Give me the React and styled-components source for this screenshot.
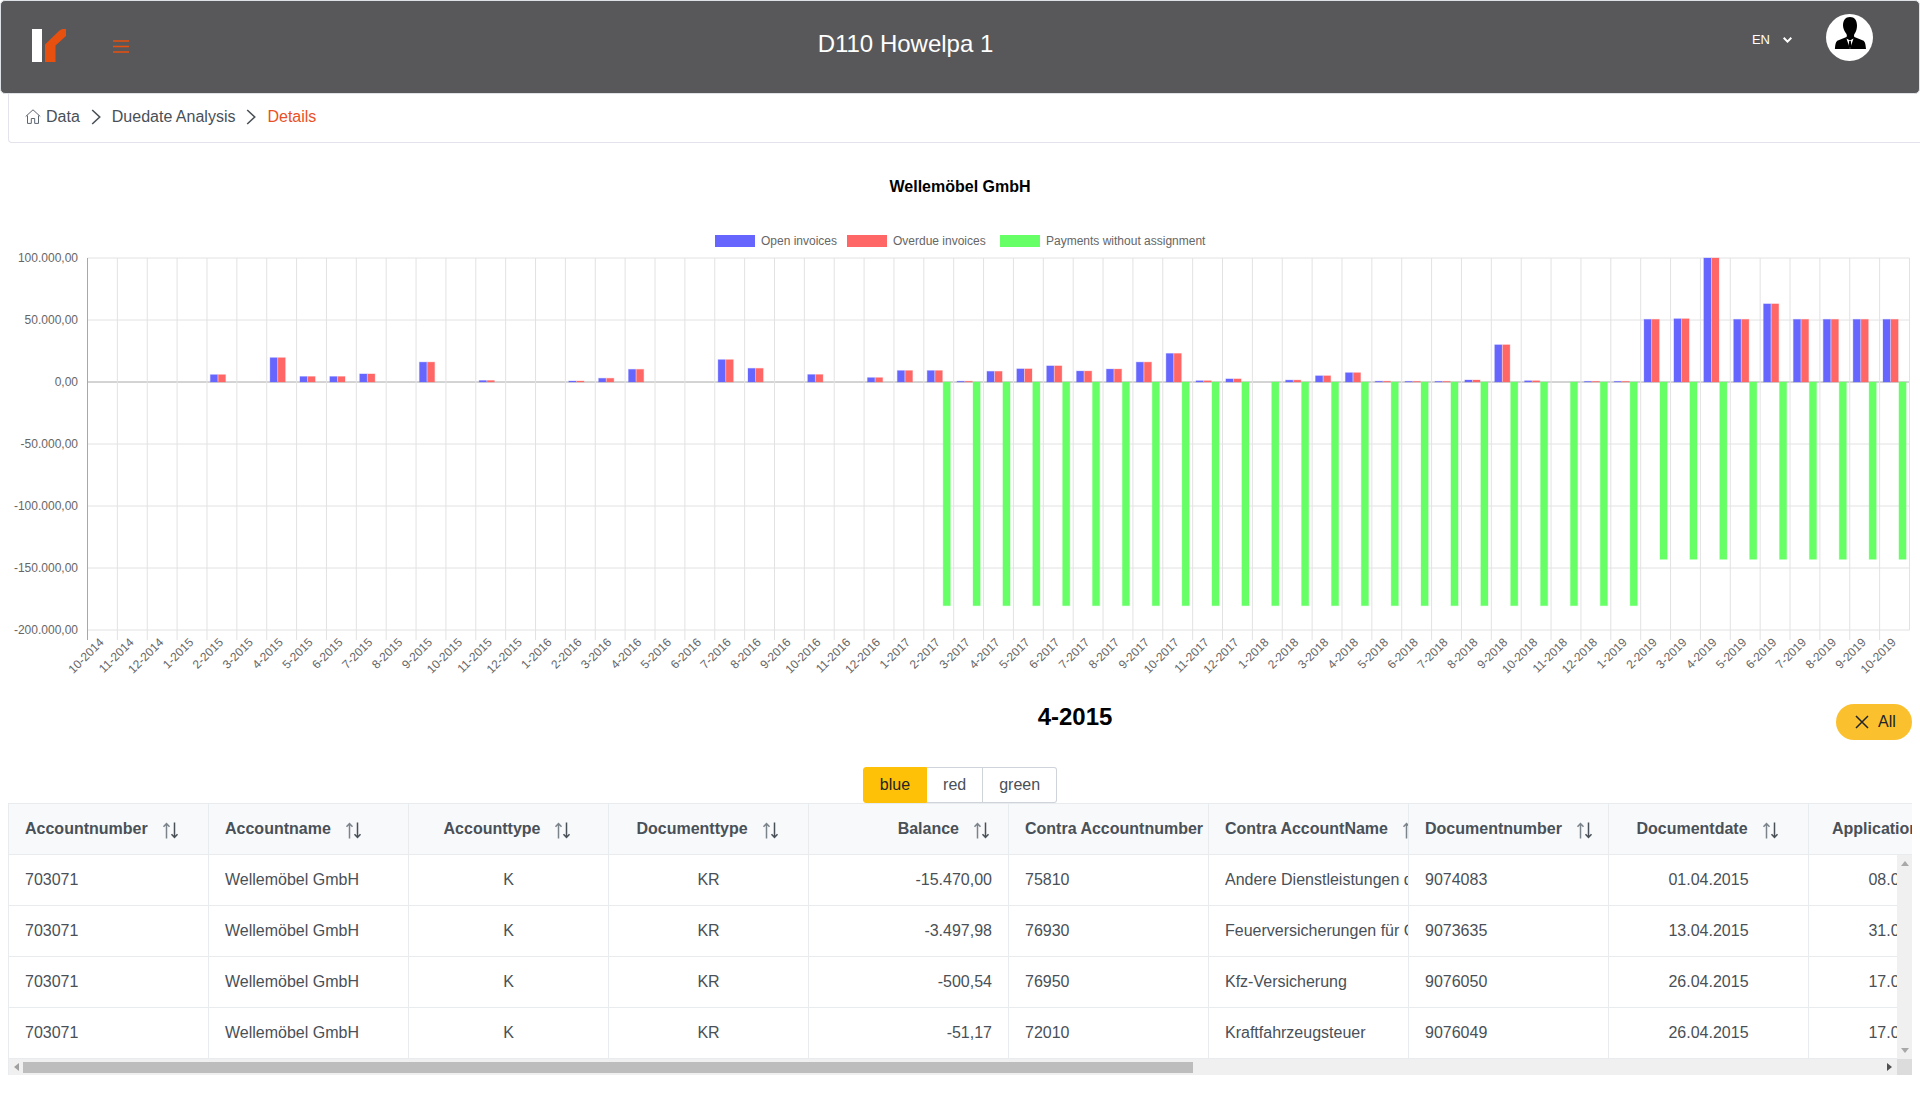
import React from 'react';
import styled, { createGlobalStyle } from 'styled-components';

const months = [];
for (let i = 0; i < 61; i++) {
  const m = ((9 + i) % 12) + 1;
  const y = 2014 + Math.floor((9 + i) / 12);
  months.push(m + '-' + y);
}

// open/overdue amounts per month in thousands, same value on both series
const openValues = [
  0, 0, 0, 0, 5.9, 0, 19.6, 4.4, 4.4, 6.5, 0, 16, 0, 1.2, 0, 0, 0.8, 3, 10.2, 0, 0,
  18, 11, 0, 6, 0, 3.5, 9.2, 9.2, 0.6, 8.6, 10.6, 13, 8.8, 10.4, 16, 23, 1, 2.5, 0,
  1.5, 5, 7.5, 0.6, 0.5, 0.5, 1.6, 30, 1, 0, 0.5, 0.5, 50.5, 51, 100, 50.5, 63, 50.5,
  50.5, 50.5, 50.5,
];

const greenValue = (i) => {
  if (i < 28) return 0;
  return i < 52 ? -180.4 : -143;
};

const yTicks = [100, 50, 0, -50, -100, -150, -200];
const tickLabel = (v) => (v === 0 ? '0,00' : (v < 0 ? '-' : '') + Math.abs(v) + '.000,00');

const LEFT = 87.5;
const RIGHT = 1909.5;
const STEP = (RIGHT - LEFT) / 61;
const PLOT_TOP = 115;
const ZERO = 239;
const PLOT_BOTTOM = 487;
const PX = 1.24;

const legend = [
  { label: 'Open invoices', x: 715, color: '#6666ff' },
  { label: 'Overdue invoices', x: 847, color: '#ff6666' },
  { label: 'Payments without assignment', x: 1000, color: '#66ff66' },
];

const Bar = ({ index, slot, value, color, edge }) => {
  if (!value) return null;
  const x = LEFT + index * STEP + STEP * 0.1 + slot * (STEP * 0.8) / 3 + 0.4;
  const h = Math.abs(value) * PX;
  const y = value > 0 ? ZERO - h : ZERO;
  return <rect x={x} y={y} width={7.2} height={h} fill={color} stroke={edge} strokeWidth="1" />;
};

const DuedateChart = () => (
  <ChartSvg width="1920" height="559" viewBox="0 0 1920 559">
    <text x="960" y="49" textAnchor="middle" fontSize="16" fontWeight="700" fill="#000">
      Wellemöbel GmbH
    </text>
    {legend.map((l) => (
      <g key={l.label}>
        <rect x={l.x} y={92} width="40" height="12" fill={l.color} />
        <text x={l.x + 46} y={102} fontSize="12" fill="#666">{l.label}</text>
      </g>
    ))}
    {yTicks.map((v) => {
      const y = ZERO - v * PX;
      return (
        <g key={v}>
          <line x1={LEFT} x2={RIGHT} y1={y} y2={y} stroke={v === 0 ? '#a8a8a8' : '#e2e2e2'} />
          <text x="78" y={y + 4} textAnchor="end" fontSize="12" fill="#666">{tickLabel(v)}</text>
        </g>
      );
    })}
    {months.map((m, i) => {
      const x = LEFT + i * STEP;
      return (
        <g key={m}>
          <line x1={x} x2={x} y1={PLOT_TOP} y2={PLOT_BOTTOM + 10} stroke={i === 0 ? '#a8a8a8' : '#e2e2e2'} />
          <text
            transform={`translate(${x + 17} ${PLOT_BOTTOM + 13}) rotate(-45)`}
            textAnchor="end"
            fontSize="12"
            fill="#666"
          >
            {m}
          </text>
        </g>
      );
    })}
    <line x1={RIGHT} x2={RIGHT} y1={PLOT_TOP} y2={PLOT_BOTTOM} stroke="#e2e2e2" />
    {openValues.map((v, i) => (
      <g key={i}>
        <Bar index={i} slot={0} value={v} color="#6666ff" edge="rgba(102,102,255,0.3)" />
        <Bar index={i} slot={1} value={v} color="#ff6666" edge="rgba(255,102,102,0.3)" />
        <Bar index={i} slot={2} value={greenValue(i)} color="#66ff66" edge="rgba(102,255,102,0.3)" />
      </g>
    ))}
  </ChartSvg>
);

const SortIcon = () => (
  <SortSvg viewBox="0 0 17 17" fill="none" strokeWidth="1.5">
    <path d="M4.5 16.5V1.5M1.5 4.8l3-3.3 3 3.3" stroke="#7b838b" />
    <path d="M12.5 .5v15M9.5 12.2l3 3.3 3-3.3" stroke="#495057" />
  </SortSvg>
);

const columns = [
  { title: 'Accountnumber', align: 'left' },
  { title: 'Accountname', align: 'left' },
  { title: 'Accounttype', align: 'center' },
  { title: 'Documenttype', align: 'center' },
  { title: 'Balance', align: 'right' },
  { title: 'Contra Accountnumber', align: 'left' },
  { title: 'Contra AccountName', align: 'left' },
  { title: 'Documentnumber', align: 'left' },
  { title: 'Documentdate', align: 'center' },
  { title: 'Applicationdate', align: 'center' },
];

const rows = [
  ['703071', 'Wellemöbel GmbH', 'K', 'KR', '-15.470,00', '75810', 'Andere Dienstleistungen durch Dritte', '9074083', '01.04.2015', '08.04.2015'],
  ['703071', 'Wellemöbel GmbH', 'K', 'KR', '-3.497,98', '76930', 'Feuerversicherungen für Gebäude', '9073635', '13.04.2015', '31.03.2015'],
  ['703071', 'Wellemöbel GmbH', 'K', 'KR', '-500,54', '76950', 'Kfz-Versicherung', '9076050', '26.04.2015', '17.04.2015'],
  ['703071', 'Wellemöbel GmbH', 'K', 'KR', '-51,17', '72010', 'Kraftfahrzeugsteuer', '9076049', '26.04.2015', '17.04.2015'],
];

const App = () => (
  <>
    <GlobalStyle />
    <Topbar>
      <LogoBox>
        <svg width="36" height="34" viewBox="0 0 36 34">
          <rect x="0" y="0" width="10" height="33" fill="#fff" />
          <path d="M13 33V15.5L27.5 1.5Q29 0 31 0H34V7L23.5 16.5V33Z" fill="#e8500f" />
        </svg>
      </LogoBox>
      <MenuButton>
        <svg width="16" height="13" viewBox="0 0 16 13" stroke="#e8500f" strokeWidth="1.5">
          <path d="M0 1h16M0 6.5h16M0 12h16" />
        </svg>
      </MenuButton>
      <PageTitle>D110 Howelpa 1</PageTitle>
      <LangSwitch>
        EN
        <svg width="9" height="6" viewBox="0 0 9 6" fill="none" stroke="#fff" strokeWidth="2">
          <path d="M.7.8l3.8 3.8L8.3.8" />
        </svg>
      </LangSwitch>
      <Avatar>
        <svg width="47" height="47" viewBox="0 0 47 47">
          <circle cx="23.5" cy="23.5" r="23.5" fill="#fff" />
          <path d="M24 3c4.500 0 7 3.300 7 8.500 0 3-.8 6-2.400 8.300-.6 1-.8 2.200-.2 3.200l8.600 3.400c1.800.8 2.600 2.900 3 8.600H8.900c.4-5.700 1.200-7.800 3-8.600l8.600-3.400c.6-1 .4-2.200-.2-3.200C18.700 17.500 17 14.500 17 11.500 17 6.300 19.500 3 24 3z" fill="#000" />
          <path d="M20.500 24.500L24 35 27.500 24.500 24 26.500z" fill="#fff" />
          <path d="M23.200 27h1.600l.7 5L24 35 22.500 32z" fill="#000" />
        </svg>
      </Avatar>
    </Topbar>

    <Breadcrumb>
      <svg width="16" height="15" viewBox="0 0 16 15" fill="none" stroke="#5a6570" strokeWidth="1">
        <path d="M.7 7.500L8 .8l7.300 6.700M2.500 6.500v7.900h3.800V9.500h3.400v4.900h3.800V6.500" />
      </svg>
      <CrumbText>Data</CrumbText>
      <CrumbArrow />
      <CrumbText>Duedate Analysis</CrumbText>
      <CrumbArrow />
      <CrumbText $current>Details</CrumbText>
    </Breadcrumb>

    <DuedateChart />

    <Content>
      <TitleRow>
        <PeriodTitle>4-2015</PeriodTitle>
        <ClearButton>
          <svg width="14" height="14" viewBox="0 0 14 14" fill="none" stroke="#212529" strokeWidth="1.500">
            <path d="M1 1l12 12M13 1L1 13" />
          </svg>
          All
        </ClearButton>
      </TitleRow>

      <SeriesSwitch>
        <SeriesButton $active>blue</SeriesButton>
        <SeriesButton>red</SeriesButton>
        <SeriesButton>green</SeriesButton>
      </SeriesSwitch>

      <TablePanel>
        <HeadRow>
          {columns.map((c) => (
            <HeadCell key={c.title} $align={c.align}>
              {c.title}
              <SortIcon />
            </HeadCell>
          ))}
        </HeadRow>
        <BodyArea>
          <BodyRows>
            {rows.map((row, r) => (
              <Row key={r}>
                {row.map((value, i) => (
                  <Cell key={i} $align={columns[i].align}>{value}</Cell>
                ))}
              </Row>
            ))}
          </BodyRows>
          <VTrack>
            <Arrow $dir="up" />
            <Arrow $dir="down" />
          </VTrack>
          <HTrack>
            <Arrow $dir="left" />
            <HThumb />
            <Arrow $dir="right" />
          </HTrack>
          <Corner />
        </BodyArea>
      </TablePanel>
    </Content>
  </>
);

const CrumbArrow = () => (
  <CrumbSvg width="10" height="16" viewBox="0 0 10 16" fill="none" stroke="#495057" strokeWidth="1.6">
    <path d="M1.200 1l7.500 7-7.500 7" />
  </CrumbSvg>
);

export default App;

const GlobalStyle = createGlobalStyle`
  html, body {
    margin: 0;
    padding: 0;
    background: #fff;
    font-family: "Liberation Sans", Arial, sans-serif;
    color: #495057;
    overflow: hidden;
  }
  * {
    box-sizing: border-box;
  }
`;

const Topbar = styled.header`
  display: flex;
  align-items: center;
  height: 94px;
  background: #58585a;
  border: 1px solid #dee2e6;
  border-radius: 5px;
`;
const LogoBox = styled.div`
  display: flex;
  width: 112px;
  height: 100%;
  padding: 28px 0 0 31px;
`;
const MenuButton = styled.div`
  display: flex;
  align-items: center;
  margin-top: -1px;
`;
const PageTitle = styled.h1`
  flex: 1;
  margin: 0 0 6px 0;
  padding-right: 70px;
  text-align: center;
  color: #fff;
  font-size: 24px;
  font-weight: 400;
`;
const LangSwitch = styled.div`
  display: flex;
  align-items: center;
  gap: 13px;
  margin: 0 34px 15px 0;
  color: #fff;
  font-size: 13px;
`;
const Avatar = styled.div`
  display: flex;
  margin: 0 46px 19px 0;
`;
const Breadcrumb = styled.nav`
  display: flex;
  align-items: center;
  height: 49px;
  margin-left: 8px;
  padding: 0 16px 3px;
  border: 1px solid #e2e3ec;
  border-top: none;
  border-right: none;
  border-radius: 0 0 0 4px;
`;
const CrumbText = styled.span`
  padding-left: 5px;
  font-size: 16px;
  color: ${(p) => (p.$current ? '#ea5025' : '#495057')};
`;
const CrumbSvg = styled.svg`
  margin: 1px 6px 0 11px;
`;
const ChartSvg = styled.svg`
  display: block;
  font-family: "Liberation Sans", Arial, sans-serif;
`;
const Content = styled.main`
  padding: 0 8px;
`;
const TitleRow = styled.div`
  display: flex;
  align-items: center;
  height: 38px;
  margin-top: 1px;
`;
const PeriodTitle = styled.h2`
  flex: 1;
  margin: 0 0 10px;
  padding-left: 306px;
  text-align: center;
  color: #000;
  font-size: 24px;
  font-weight: 700;
`;
const ClearButton = styled.button`
  display: flex;
  align-items: center;
  gap: 9px;
  width: 76px;
  height: 36px;
  padding: 0 0 0 19px;
  border: none;
  border-radius: 18px;
  background: #fbc02d;
  color: #212529;
  font-family: inherit;
  font-size: 16px;
`;
const SeriesSwitch = styled.div`
  display: flex;
  justify-content: center;
  margin-top: 26px;
`;
const SeriesButton = styled.button`
  height: 36px;
  padding: 0 16px;
  border: 1px solid ${(p) => (p.$active ? '#ffc107' : '#ced4da')};
  border-left-width: ${(p) => (p.$active ? '1px' : '0')};
  background: ${(p) => (p.$active ? '#ffc107' : '#fff')};
  color: ${(p) => (p.$active ? '#212529' : '#495057')};
  font-family: inherit;
  font-size: 16px;
  &:first-child {
    border-radius: 3px 0 0 3px;
  }
  &:last-child {
    border-radius: 0 3px 3px 0;
  }
`;
const TablePanel = styled.section`
  width: 1904px;
  overflow: hidden;
  border-left: 1px solid #e9ecef;
`;
const HeadRow = styled.div`
  display: grid;
  grid-template-columns: repeat(10, 200px);
  height: 52px;
  background: #f8f9fa;
  border-top: 1px solid #e9ecef;
  border-bottom: 1px solid #e9ecef;
`;
const alignMap = { left: 'flex-start', center: 'center', right: 'flex-end' };
const HeadCell = styled.div`
  display: flex;
  align-items: center;
  justify-content: ${(p) => alignMap[p.$align]};
  padding: 0 17px 0 16px;
  overflow: hidden;
  white-space: nowrap;
  border-right: 1px solid #e9ecef;
  color: #495057;
  font-size: 16px;
  font-weight: 700;
`;
const SortSvg = styled.svg`
  flex: none;
  width: 17px;
  height: 17px;
  margin: 2px 1px 0 14px;
`;
const BodyArea = styled.div`
  display: grid;
  grid-template-columns: 1fr 15px;
  grid-template-rows: 204px 16px;
`;
const BodyRows = styled.div`
  overflow: hidden;
`;
const Row = styled.div`
  display: grid;
  grid-template-columns: repeat(10, 200px);
  height: 51px;
  border-bottom: 1px solid #e9ecef;
`;
const Cell = styled.div`
  display: flex;
  align-items: center;
  justify-content: ${(p) => alignMap[p.$align]};
  padding: 0 16px;
  overflow: hidden;
  white-space: nowrap;
  border-right: 1px solid #e9ecef;
  font-size: 16px;
`;
const VTrack = styled.div`
  display: flex;
  flex-direction: column;
  justify-content: space-between;
  align-items: center;
  padding: 6px 0;
  background: #f0f0f0;
`;
const HTrack = styled.div`
  display: flex;
  align-items: center;
  background: #f0f0f0;
  padding: 0 5px;
`;
const HThumb = styled.div`
  width: 1170px;
  height: 11px;
  margin: 1px auto 0 4px;
  background: #bdbdbd;
`;
const Corner = styled.div`
  background: #dcdcdc;
`;
const arrowShape = {
  up: 'border-width: 0 4px 5px; border-color: transparent transparent #a8a8a8;',
  down: 'border-width: 5px 4px 0; border-color: #a8a8a8 transparent transparent;',
  left: 'border-width: 4px 5px 4px 0; border-color: transparent #a0a0a0 transparent transparent;',
  right: 'border-width: 4px 0 4px 5px; border-color: transparent transparent transparent #505050;',
};
const Arrow = styled.span`
  width: 0;
  height: 0;
  border-style: solid;
  ${(p) => arrowShape[p.$dir]}
`;
